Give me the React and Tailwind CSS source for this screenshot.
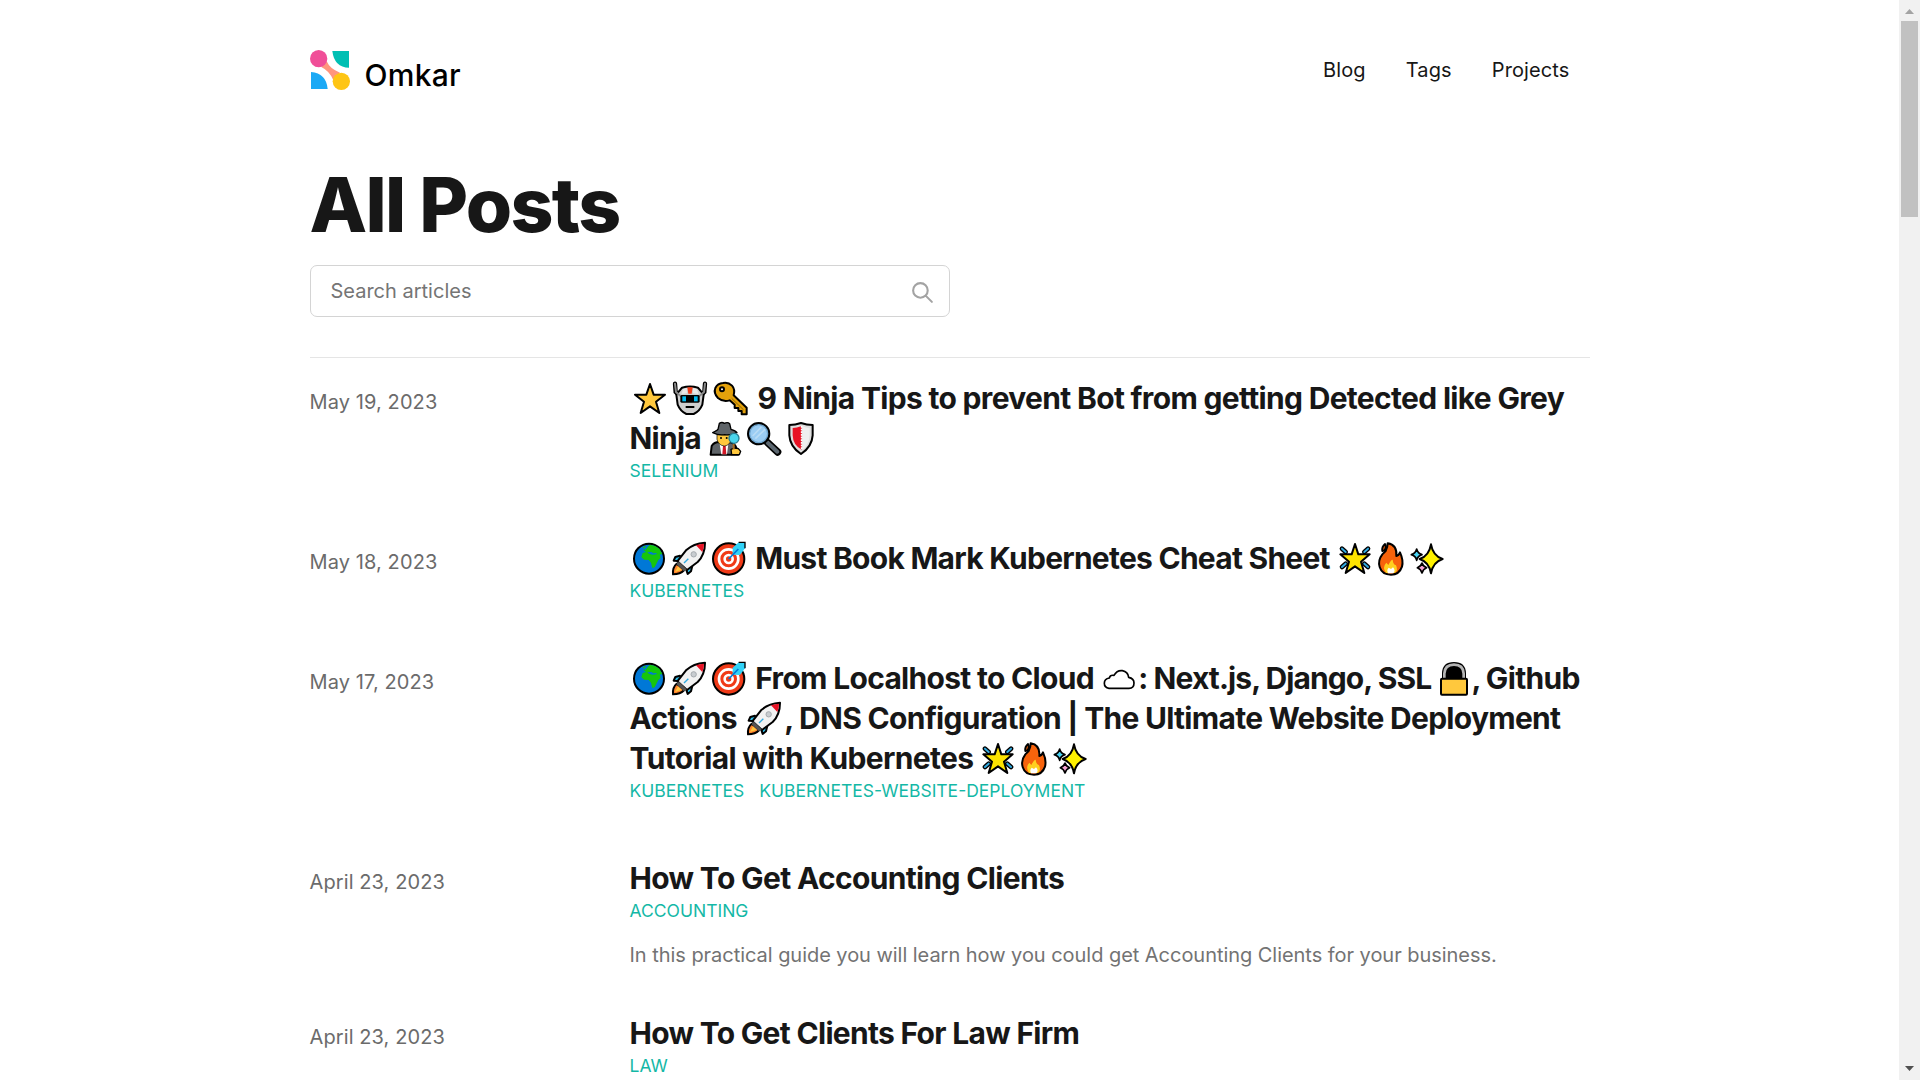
import React from "react";

// Each drawing sits in a 34px box, three drawing units to a pixel.
const K = { stroke: "#000", strokeWidth: 6, strokeLinejoin: "round", strokeLinecap: "round" };

function Star() {
  return <path d="M51 6 L62 38 L96 38 L69 59 L79 93 L51 73 L23 93 L33 59 L6 38 L40 38Z" fill="#ffc83d" {...K} />;
}
function Robot() {
  return (
    <g>
      <path d="M6 5 L8 30 L18 40 M96 5 L94 30 L84 40" fill="none" stroke="#000" strokeWidth="13" strokeLinecap="round" />
      <path d="M27 17 Q51 10 75 17 L92 38 L88 68 Q80 88 62 96 L40 96 Q22 88 14 68 L10 38Z" fill="#cfcfcf" {...K} />
      <path d="M6 5 L9 30 L20 40 M96 5 L93 30 L82 40" fill="none" stroke="#8a8a8a" strokeWidth="6" strokeLinecap="round" />
      <path d="M30 21 L42 18 V34 L26 36Z M72 21 L60 18 V34 L76 36Z" fill="#e9e9e9" />
      <path d="M43 16 H59 L56 35 H46Z" fill="#f03a17" />
      <rect x="22" y="39" width="58" height="23" rx="4" fill="#000" />
      <rect x="28" y="43" width="11" height="15" fill="#00bcf2" />
      <rect x="63" y="43" width="11" height="15" fill="#00bcf2" />
      <path d="M38 75 H64" stroke="#000" strokeWidth="6" />
    </g>
  );
}
function Key() {
  return (
    <g>
      <path d="M27 3 Q42 -1 54 11 Q64 22 59 40 L98 77 V97 H83 V87 H73 V78 H62 V68 L47 55 Q27 61 12 48 Q-2 33 4 18 Q11 4 27 3Z" fill="#e3a10b" {...K} />
      <circle cx="24" cy="22" r="6" fill="#fff" {...K} />
      <path d="M53 49 L89 84" stroke="#8d6500" strokeWidth="3" />
    </g>
  );
}
function Detective() {
  return (
    <g>
      <path d="M5 98 L8 72 Q15 60 31 60 H62 Q82 62 88 98Z" fill="#5f6468" {...K} />
      <path d="M32 66 H58 L54 97 H37Z" fill="#fff" />
      <path d="M42 72 H50 L52 97 H40Z" fill="#d21626" />
      <path d="M24 38 H67 V52 Q63 70 46 72 Q28 70 24 52Z" fill="#ffc83d" stroke="#000" strokeWidth="2" />
      <path d="M11 32 Q26 25 27 22 L31 4 Q39 -1 46 4 Q56 -1 62 5 L66 22 Q80 26 84 32 Q65 41 47 38 Q29 41 11 32Z" fill="#5f6468" {...K} strokeWidth="4" />
      <circle cx="36" cy="48" r="3" />
      <circle cx="53" cy="48" r="3" />
      <path d="M66 82 L76 78 L88 80 L95 88 L91 98 H68Z" fill="#ffc83d" {...K} strokeWidth="4" />
      <path d="M74 66 V82" stroke="#a96b20" strokeWidth="6" />
      <circle cx="75" cy="49" r="15" fill="#4ad5ec" stroke="#277d91" strokeWidth="4" />
    </g>
  );
}
function Magnifier() {
  return (
    <g>
      <path d="M61 61 L92 90" stroke="#000" strokeWidth="22" strokeLinecap="round" />
      <path d="M62 62 L91 89" stroke="#5c6770" strokeWidth="12" strokeLinecap="round" />
      <circle cx="35" cy="35" r="31" fill="#9bcdf3" {...K} strokeWidth="8" />
      <circle cx="35" cy="35" r="27" fill="none" stroke="#70a7d0" strokeWidth="4" />
      <path d="M17 42 L43 15 M25 50 L54 22" stroke="#b9dcf5" strokeWidth="5" />
    </g>
  );
}
function Shield() {
  return (
    <g>
      <path d="M16 9 Q34 9 51 3 Q68 9 86 9 V40 Q84 74 51 96 Q18 74 16 40Z" fill="#dedede" {...K} />
      <path d="M26 18 Q38 18 53 12 V83 Q27 70 26 40Z" fill="#e81224" />
      <path d="M53 12 V84" stroke="#fff" strokeWidth="5" strokeDasharray="5 3" />
      <path d="M56 13 Q66 18 77 18 V40 Q75 68 56 84" fill="#efefef" />
    </g>
  );
}
function Globe() {
  return (
    <g>
      <circle cx="51" cy="50" r="45" fill="#0078d7" {...K} />
      <path d="M34 24 L44 17 L54 8 L69 12 L82 20 L91 36 L83 38 L86 48 L79 54 L74 64 L68 76 L61 78 L57 62 L50 54 L36 53 L28 45 L32 33 L42 30Z" fill="#16c60c" />
      <path d="M46 31 L58 30 L64 34 L74 33 L73 37 L61 38 L51 35Z M34 18 L42 19 L48 14 L40 25Z" fill="#0078d7" />
      <path d="M31 17 L38 12 L42 14 L37 19Z" fill="#16c60c" />
    </g>
  );
}
function Rocket() {
  return (
    <g>
      <path d="M24 41 L10 45 L5 56 L22 57 M61 71 L57 88 L47 96 L42 80" fill="#31bde8" {...K} />
      <path d="M14 65 Q1 76 3 97 Q25 97 37 84Z" fill="#ff822d" {...K} />
      <path d="M9 90 L18 73 L29 84Z" fill="#ffc83d" />
      <path d="M99 2 Q64 4 42 25 L16 58 L45 84 L77 60 Q99 38 99 2Z" fill="#f2f2f2" {...K} />
      <path d="M96 5 Q84 5 72 10 L91 30 Q96 20 96 5Z" fill="#e81224" />
      <path d="M21 59 L44 82 L36 88 L13 66Z" fill="#555" />
      <circle cx="65" cy="37" r="8" fill="#c8ccd0" stroke="#a5aaae" strokeWidth="3" />
      <path d="M36 63 L49 50" stroke="#31a9df" strokeWidth="4" />
    </g>
  );
}
function Target() {
  return (
    <g>
      <circle cx="50" cy="51" r="47" fill="#f03a17" {...K} />
      <circle cx="50" cy="51" r="29" fill="none" stroke="#fff" strokeWidth="8" />
      <circle cx="50" cy="51" r="12" fill="none" stroke="#fff" strokeWidth="8" />
      <path d="M62 38 L62 17 L80 1 H99 V19 L84 39Z" fill="#31d2f7" />
      <path d="M80 1 H99 V19" fill="none" stroke="#000" strokeWidth="4" />
      <path d="M50 51 L79 21" stroke="#0078d7" strokeWidth="5" />
    </g>
  );
}
function GlowStar() {
  return (
    <g>
      <path d="M12 20 L23 30 M90 20 L79 30 M12 75 L23 65 M90 75 L79 65" stroke="#000" strokeWidth="14" strokeLinecap="round" />
      <path d="M12 20 L23 30 M90 20 L79 30 M12 75 L23 65 M90 75 L79 65" stroke="#31a9df" strokeWidth="6" strokeLinecap="round" />
      <path d="M51 6 L61 37 L95 37 L69 59 L79 93 L51 73 L23 93 L33 59 L7 37 L41 37Z" fill="#fde300" {...K} />
    </g>
  );
}
function Fire() {
  return (
    <g>
      <path d="M41 4 Q70 9 67 42 Q74 41 78 31 Q89 55 84 74 Q76 98 51 98 Q24 98 17 75 Q11 55 25 37 L35 27 Q41 16 41 4Z" fill="#f7630c" {...K} />
      <path d="M25 27 Q23 14 33 6 Q39 17 31 25Z" fill="#f7630c" {...K} />
      <path d="M36 93 Q24 75 37 62 L43 69 Q51 53 56 53 Q57 67 66 70 Q73 84 63 93Z" fill="#ffd01f" />
      <path d="M42 94 Q37 84 44 77 L51 81 L57 76 Q66 86 58 94Z" fill="#fff" />
    </g>
  );
}
function Sparkles() {
  return (
    <g>
      <path d="M63 7 Q69 42 98 51 Q69 60 63 94 Q57 60 29 51 Q57 42 63 7Z" fill="#fff100" {...K} />
      <path d="M20 21 Q23 34 36 38 Q23 42 20 55 Q17 42 4 38 Q17 34 20 21Z" fill="#4ad5f5" {...K} strokeWidth="5" />
      <path d="M36 63 Q39 73 50 77 Q39 81 36 93 Q33 81 22 77 Q33 73 36 63Z" fill="#f5a1d1" {...K} strokeWidth="5" />
    </g>
  );
}
function Cloud() {
  return <path d="M21 79 Q7 77 7 64 Q7 50 22 48 Q24 38 36 40 Q45 24 61 26 Q78 29 80 46 Q96 49 96 63 Q96 79 81 79Z" fill="#fff" {...K} strokeWidth="5" />;
}
function Lock() {
  return (
    <g>
      <path d="M18 51 V34 Q19 3 51 3 Q83 3 84 34 V51Z" fill="#000" {...K} />
      <path d="M22 51 V35 Q23 8 51 8 Q79 8 80 35 V51" fill="none" stroke="#b5b5b5" strokeWidth="8" />
      <rect x="12" y="50" width="78" height="48" rx="3" fill="#ffc83d" {...K} />
    </g>
  );
}

function E({ of: Drawing, w = "w-[40.5px]" }) {
  return (
    <span className={`inline-flex h-[34px] justify-center align-[-7px] ${w}`}>
      <svg viewBox="0 0 102 102" className="h-[34px] w-[34px] shrink-0 overflow-visible">
        <Drawing />
      </svg>
    </span>
  );
}

const narrow = "w-[36px]";
const wide = "w-[39.8px]";
const trio = (
  <>
    <E of={Globe} w={wide} /><E of={Rocket} w={wide} /><E of={Target} w={wide} />
  </>
);
const shine = (
  <>
    <E of={GlowStar} w={narrow} /><E of={Fire} w={narrow} /><E of={Sparkles} w={narrow} />
  </>
);

const posts = [
  {
    date: "May 19, 2023",
    height: "h-[160px]",
    lines: [
      <span className="tracking-[-0.68px]"><E of={Star} /><E of={Robot} /><E of={Key} /> 9 Ninja Tips to prevent Bot from getting Detected like Grey</span>,
      <span className="tracking-[-0.75px]">Ninja <E of={Detective} w="w-[37.5px]" /><E of={Magnifier} w="w-[38px]" /><E of={Shield} w="w-[36px]" /></span>,
    ],
    tags: ["selenium"],
  },
  {
    date: "May 18, 2023",
    height: "h-[120px]",
    lines: [<span className="tracking-[-0.75px]">{trio} Must Book Mark Kubernetes Cheat Sheet<span className="tracking-[0.25px]"> </span>{shine}</span>],
    tags: ["kubernetes"],
  },
  {
    date: "May 17, 2023",
    height: "h-[200px]",
    lines: [
      <>
        <span className="tracking-[-0.7px]">{trio} From Localhost to Cloud <E of={Cloud} w="w-[38px]" /></span>
        <span className="tracking-[-0.91px]">: Next.js, Django, SSL <E of={Lock} w="w-[34px]" />, </span>Github
      </>,
      <span className="tracking-[-0.71px]">Actions <E of={Rocket} w="w-[41px]" />, DNS Configuration | The Ultimate Website Deployment</span>,
      <>Tutorial with Kubernetes {shine}</>,
    ],
    tags: ["kubernetes", "kubernetes-website-deployment"],
  },
  {
    date: "April 23, 2023",
    height: "h-[155px]",
    lines: ["How To Get Accounting Clients"],
    tags: ["accounting"],
    summary: "In this practical guide you will learn how you could get Accounting Clients for your business.",
  },
  {
    date: "April 23, 2023",
    height: "h-[155px]",
    lines: [<span className="tracking-[-0.7px]">How To Get Clients For Law Firm</span>],
    tags: ["law"],
  },
];

function Logo() {
  return (
    <svg viewBox="0 0 120 120" className="h-10 w-10 overflow-visible">
      <path d="M34 51 L50 34 Q60 57 90 68 L70 91 Q60 64 34 51Z" fill="#ff957d" />
      <circle cx="26" cy="26" r="26" fill="#f04e98" />
      <circle cx="94" cy="94" r="26" fill="#fec514" />
      <path d="M67 3 H117 V53 Q73 53 67 3Z" fill="#00bfb3" />
      <path d="M3 66 Q49 70 53 117 H3Z" fill="#1ba9f5" />
    </svg>
  );
}

export default function App() {
  return (
    <div className="flex h-[1080px] w-[1920px] overflow-hidden bg-white font-['Inter',sans-serif] text-[#171717]">
      <div className="flex-1">
        <div className="mx-auto w-[1280px]">
          <header className="flex h-[140px] items-center justify-between">
            <div className="flex items-center gap-[15px]">
              <Logo />
              <span className="pt-[10px] text-[30px] leading-[40px] font-medium tracking-[0.25px] text-black">Omkar</span>
            </div>
            <nav className="flex text-[20px] leading-[30px] tracking-[0.12px]">
              <a className="px-5">Blog</a>
              <a className="px-5">Tags</a>
              <a className="px-5">Projects</a>
            </nav>
          </header>
          <div className="h-[218px] border-b border-neutral-200 pt-[30px]">
            <h1 className="text-[75px] leading-[70px] font-extrabold tracking-[-1.7px]">All Posts</h1>
            <div className="mt-[25px] flex h-[52px] w-[640px] items-center justify-between rounded-[7px] border border-neutral-300 pr-[14px] pl-5 text-[20px] text-[#757575]">
              <span>Search articles</span>
              <svg viewBox="0 0 24 24" className="mt-[2px] h-[25px] w-[25px]" fill="none" stroke="#a3a3a3" strokeWidth="2" strokeLinecap="round" strokeLinejoin="round">
                <path d="M21 21l-6-6m2-5a7 7 0 11-14 0 7 7 0 0114 0z" />
              </svg>
            </div>
          </div>
          <main className="pt-5">
            {posts.map((p, i) => (
              <article key={i} className={`flex ${p.height}`}>
                <time className="w-[320px] shrink-0 pt-[9px] text-[20px] leading-[30px] tracking-[0.1px] text-[#6b6b6b]">{p.date}</time>
                <div className="flex-1">
                  <h2 className="text-[30px] leading-[40px] font-bold tracking-[-0.66px] whitespace-nowrap">
                    {p.lines.map((l, j) => <div key={j} className="h-10">{l}</div>)}
                  </h2>
                  <div className="flex gap-[15px] text-[17.5px] leading-[25px] text-[#14b8a6] uppercase">
                    {p.tags.map((t) => <a key={t}>{t}</a>)}
                  </div>
                  {p.summary && <p className="mt-[15px] text-[20px] leading-[35px] tracking-[-0.04px] text-[#737373]">{p.summary}</p>}
                </div>
              </article>
            ))}
          </main>
        </div>
      </div>
      <div className="flex w-[21px] flex-col items-center justify-between bg-[#f1f1f1] pt-[9px] pb-[9px]">
        <div className="flex flex-col items-center gap-[7px]">
          <svg viewBox="0 0 9 5" className="h-[5px] w-[9px]"><path d="M0 5 L4.5 0 L9 5Z" fill="#a3a3a3" /></svg>
          <div className="h-[196px] w-[17px] bg-[#c1c1c1]" />
        </div>
        <svg viewBox="0 0 9 5" className="h-[5px] w-[9px]"><path d="M0 0 H9 L4.5 5Z" fill="#505050" /></svg>
      </div>
    </div>
  );
}
